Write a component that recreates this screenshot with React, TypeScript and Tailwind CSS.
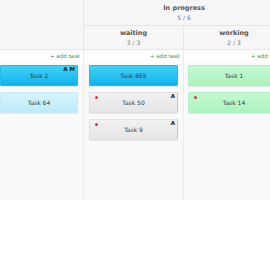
import React from "react";

type Card = { label: string; kind: "cyan" | "lightcyan" | "gray" | "green"; dot?: boolean; tag?: string };

const kindCls: Record<Card["kind"], string> = {
  cyan: "bg-gradient-to-b from-[#3fd2f8] to-[#0cb2ec] border-[#22b8ea]",
  lightcyan: "bg-gradient-to-b from-[#d6f4fd] to-[#bdebf9] border-[#c4ebf7]",
  gray: "bg-gradient-to-b from-[#f1f1f1] to-[#e6e6e6] border-[#e0e0e0] border-r-[#c8c8c8]",
  green: "bg-gradient-to-b from-[#c4fad1] to-[#adf2bf] border-[#b2efc2]",
};

function TaskCard({ c }: { c: Card }) {
  return (
    <div
      className={`relative h-[21px] border rounded-[1px] shadow-[0_1px_1px_rgba(0,0,0,0.08)] flex items-center justify-center text-[6px] text-[#3a3a3a] ${kindCls[c.kind]}`}
    >
      {c.dot && <span className="absolute left-[5px] top-[3px] w-[3px] h-[3px] rounded-full bg-[#e0304a]" />}
      {c.tag && (
        <span className="absolute right-[2px] top-[0px] text-[5.5px] font-bold leading-[7px] text-[#222]">{c.tag}</span>
      )}
      <span>{c.label}</span>
    </div>
  );
}

function AddTask() {
  return <div className="h-[13px] flex items-center justify-end text-[5.5px] text-[#3aa04a] pr-[3px]">+ add task</div>;
}

export default function App() {
  const col1: Card[] = [
    { label: "Task 2", kind: "cyan", tag: "A M" },
    { label: "Task 64", kind: "lightcyan" },
  ];
  const col2: Card[] = [
    { label: "Task 865", kind: "cyan" },
    { label: "Task 50", kind: "gray", dot: true, tag: "A" },
    { label: "Task 9", kind: "gray", dot: true, tag: "A" },
  ];
  const col3: Card[] = [
    { label: "Task 1", kind: "green" },
    { label: "Task 14", kind: "green", dot: true },
  ];

  return (
    <div
      className="w-[270px] h-[270px] overflow-hidden bg-white"
      style={{ fontFamily: '"DejaVu Sans", Verdana, sans-serif' }}
    >
      <div className="flex w-[300px]">
        {/* column 1 */}
        <div className="w-[84px] shrink-0 flex flex-col">
          <div className="h-[50px] bg-[#f6f6f6] border-r border-b border-[#e6e6e6]" />
          <div className="border-r border-[#ececec] bg-white">
            <AddTask />
          </div>
          <div className="h-[137px] bg-[#fafafa] border-r border-[#ececec] pr-[5px] pt-[2px] flex flex-col gap-[6px]">
            {col1.map((c) => (
              <TaskCard key={c.label} c={c} />
            ))}
          </div>
        </div>
        {/* in progress group */}
        <div className="w-[200px] shrink-0 flex flex-col">
          <div className="h-[26px] bg-[#f6f6f6] border-b border-[#e6e6e6] flex flex-col items-center justify-center">
            <div className="text-[6.5px] font-bold text-[#555] leading-[9px]">In progress</div>
            <div className="text-[6px] text-[#777] leading-[9px]">5 / 6</div>
          </div>
          <div className="flex">
            <div className="w-[100px] h-[24px] bg-[#f6f6f6] border-r border-b border-[#e6e6e6] flex flex-col items-center justify-center">
              <div className="text-[6.5px] font-bold text-[#555] leading-[9px]">waiting</div>
              <div className="text-[6px] text-[#777] leading-[9px]">3 / 3</div>
            </div>
            <div className="w-[100px] h-[24px] bg-[#f6f6f6] border-b border-[#e6e6e6] flex flex-col items-center justify-center">
              <div className="text-[6.5px] font-bold text-[#555] leading-[9px]">working</div>
              <div className="text-[6px] text-[#777] leading-[9px]">2 / 3</div>
            </div>
          </div>
          <div className="flex">
            <div className="w-[100px] border-r border-[#ececec] flex flex-col">
              <AddTask />
              <div className="h-[137px] bg-[#fafafa] px-[5px] pt-[2px] flex flex-col gap-[6px]">
                {col2.map((c) => (
                  <TaskCard key={c.label} c={c} />
                ))}
              </div>
            </div>
            <div className="w-[100px] flex flex-col">
              <AddTask />
              <div className="h-[137px] bg-[#fafafa] px-[4px] pt-[2px] flex flex-col gap-[6px]">
                {col3.map((c) => (
                  <TaskCard key={c.label} c={c} />
                ))}
              </div>
            </div>
          </div>
        </div>
      </div>
    </div>
  );
}
